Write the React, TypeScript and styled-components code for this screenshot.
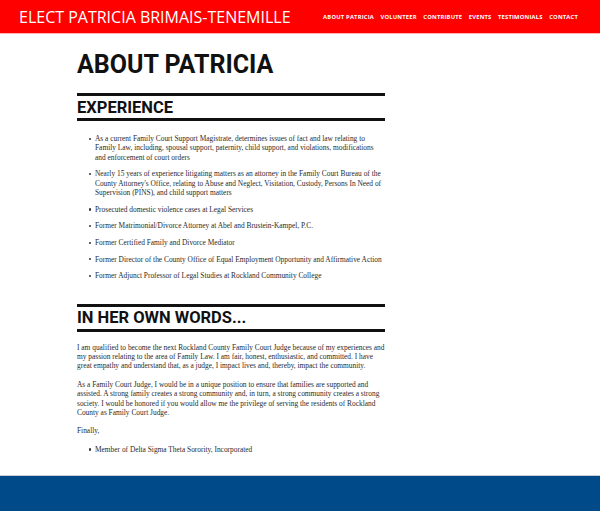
import React from "react";
import styled, { createGlobalStyle } from "styled-components";

const Global = createGlobalStyle`
  html, body { margin: 0; padding: 0; background: #fff; }
  body { font-family: "Liberation Serif", serif; }
`;

const Page = styled.div`
  display: flex;
  flex-direction: column;
  min-height: 511px;
`;

const Header = styled.header`
  background: #ff0000;
  height: 34px;
  display: flex;
  align-items: center;
  justify-content: space-between;
  padding: 0 22px 0 19px;
  box-sizing: border-box;
  border-bottom: 1px solid #ffb3b3;
`;

const SiteTitle = styled.div`
  color: #fff;
  font-family: "Open Sans", sans-serif;
  font-weight: 400;
  font-size: 16px;
  white-space: nowrap;
`;

const Nav = styled.nav`
  display: flex;
  gap: 6.5px;
`;

const NavItem = styled.a`
  color: #fff;
  font-family: "Open Sans", sans-serif;
  font-weight: 700;
  font-size: 5.8px;
  letter-spacing: 0.2px;
  text-transform: uppercase;
  text-decoration: none;
  white-space: nowrap;
`;

const Main = styled.main`
  padding: 0 215px 10px 77px;
`;

const Title = styled.h1`
  margin: 16px 0 0;
  font-family: Roboto, sans-serif;
  font-weight: 700;
  font-size: 25px;
  line-height: 30px;
  color: #111;
`;

const SectionHead = styled.h2<{ $top: number }>`
  margin: ${(p) => p.$top}px 0 0;
  border-top: 3px solid #111;
  border-bottom: 3px solid #111;
  height: 22px;
  padding: 0;
  display: flex;
  align-items: center;
  font-family: Roboto, sans-serif;
  font-weight: 700;
  font-size: 16.5px;
  color: #111;
`;

const List = styled.ul<{ $top: number }>`
  margin: ${(p) => p.$top}px 0 0;
  padding: 0 0 0 18px;
  list-style: none;
`;

const Item = styled.li`
  position: relative;
  font-size: 7.4px;
  line-height: 9.4px;
  color: #2b2b2b;
  margin-bottom: 7.2px;
  &::before {
    content: "";
    position: absolute;
    left: -6px;
    top: 3.5px;
    width: 2.4px;
    height: 2.4px;
    border-radius: 50%;
    background: #333;
  }
`;

const Para = styled.p`
  margin: 0 0 9px;
  font-size: 7.4px;
  line-height: 9.4px;
  color: #2b2b2b;
  &:first-of-type { margin-top: 11px; }
`;

const Footer = styled.footer`
  height: 35px;
  margin-top: auto;
  background: #004a8a;
  border-top: 1px solid #c9ced6;
`;

const navItems = ["About Patricia", "Volunteer", "Contribute", "Events", "Testimonials", "Contact"];

const experience = [
  "As a current Family Court Support Magistrate, determines issues of fact and law relating to Family Law, including, spousal support, paternity, child support, and violations, modifications and enforcement of court orders",
  "Nearly 15 years of experience litigating matters as an attorney in the Family Court Bureau of the County Attorney's Office, relating to Abuse and Neglect, Visitation, Custody, Persons In Need of Supervision (PINS), and child support matters",
  "Prosecuted domestic violence cases at Legal Services",
  "Former Matrimonial/Divorce Attorney at Abel and Brustein-Kampel, P.C.",
  "Former Certified Family and Divorce Mediator",
  "Former Director of the County Office of Equal Employment Opportunity and Affirmative Action",
  "Former Adjunct Professor of Legal Studies at Rockland Community College",
];

export default function App() {
  return (
    <Page>
      <Global />
      <Header>
        <SiteTitle>ELECT PATRICIA BRIMAIS-TENEMILLE</SiteTitle>
        <Nav>
          {navItems.map((n) => (
            <NavItem key={n} href="#">{n}</NavItem>
          ))}
        </Nav>
      </Header>
      <Main>
        <Title>ABOUT PATRICIA</Title>
        <SectionHead $top={13}>EXPERIENCE</SectionHead>
        <List $top={13}>
          {experience.map((e) => (
            <Item key={e}>{e}</Item>
          ))}
        </List>
        <SectionHead $top={23}>IN HER OWN WORDS...</SectionHead>
        <Para>
          I am qualified to become the next Rockland County Family Court Judge because of my experiences and my passion relating to the area of Family Law. I am fair, honest, enthusiastic, and committed. I have great empathy and understand that, as a judge, I impact lives and, thereby, impact the community.
        </Para>
        <Para>
          As a Family Court Judge, I would be in a unique position to ensure that families are supported and assisted. A strong family creates a strong community and, in turn, a strong community creates a strong society. I would be honored if you would allow me the privilege of serving the residents of Rockland County as Family Court Judge.
        </Para>
        <Para>Finally,</Para>
        <List $top={9}>
          <Item>Member of Delta Sigma Theta Sorority, Incorporated</Item>
        </List>
      </Main>
      <Footer />
    </Page>
  );
}
